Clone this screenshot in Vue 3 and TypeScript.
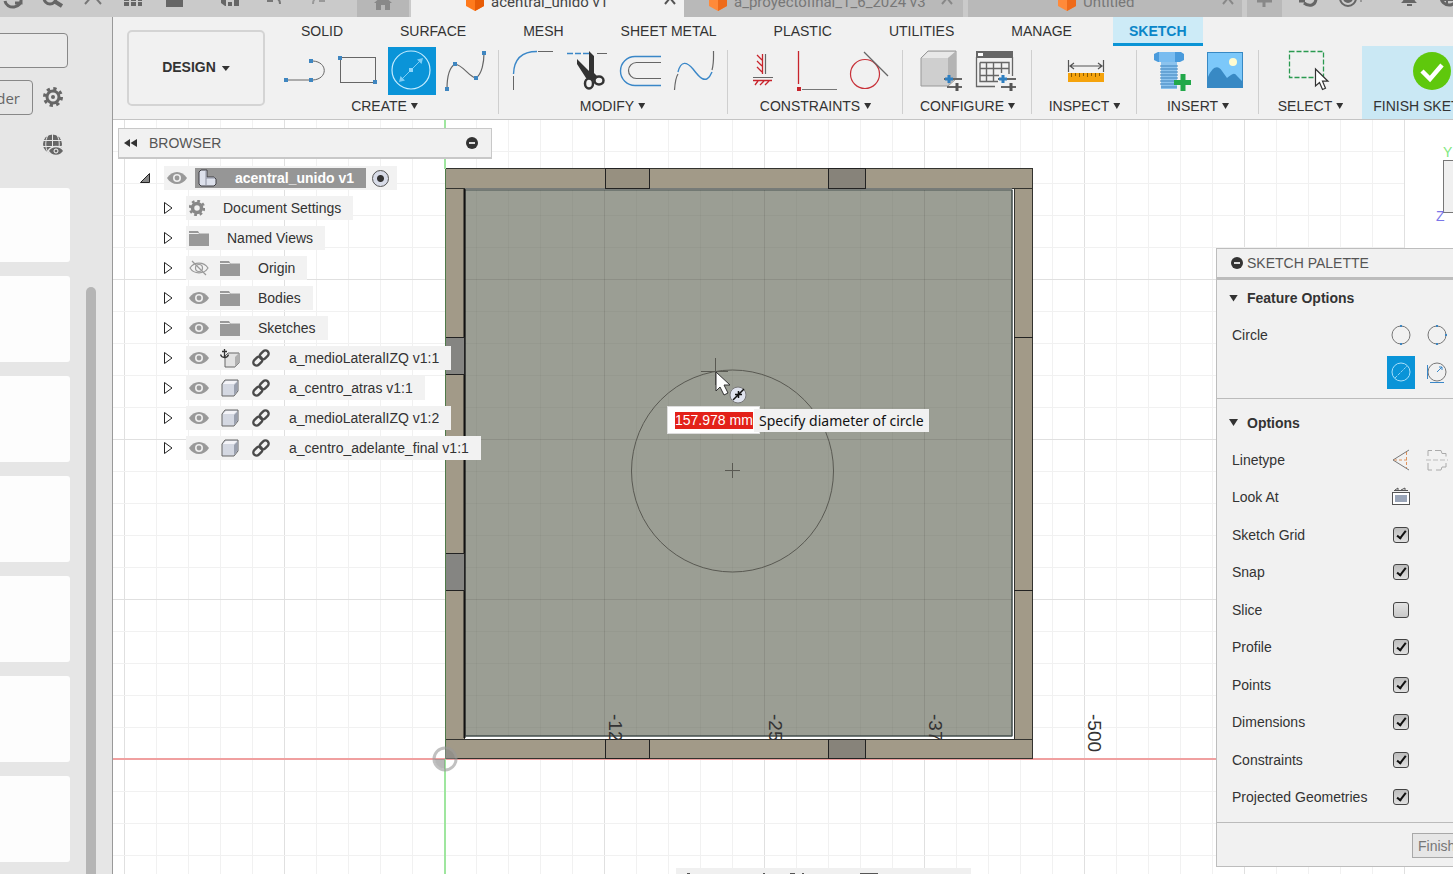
<script setup lang="ts">
import { ref } from 'vue'

interface ToolGroup { name: string; tools: { icon: string; label: string; active?: boolean }[] }
interface TreeNode { text: string; icons: string[] }
interface Option { label: string; checked: boolean }

const blue = '#3a87c8'
const dot = (x: number, y: number, c = '#3f86c0') => `<rect x="${x - 2}" y="${y - 2}" width="4" height="4" fill="${c}"/>`
const pin = (x: number, y: number) => `<rect x="${x - 1}" y="${y - 1}" width="2" height="2" fill="#3f86c0"/>`
const adjust = (x: number, y: number) =>
  `<path d="M${x} ${y + 4}H${x + 18}M${x + 3} ${y + 12}H${x + 18}" stroke="#666" stroke-width="2"/><path d="M${x + 5} ${y}v8M${x + 1} ${y + 4}h8" stroke="#2f7fc0" stroke-width="3"/><path d="M${x + 13} ${y + 8}v8" stroke="#555" stroke-width="3"/>`

const glyphs: Record<string, string> = {
  line: `<path d="M8 33H29M33 14C48 15 48 32 33 33" stroke="#666"/>${dot(6, 33)}${dot(31, 33)}${dot(31, 14)}`,
  rect: `<rect x="6.500" y="10.500" width="35" height="25" stroke="#666"/>${dot(6, 11)}${dot(41, 35)}`,
  circle: `<circle cx="23" cy="23" r="19" stroke="#c5ecff" stroke-width="1.200"/><path d="M14 32L32 14" stroke="#7fcdf5"/><path d="M11 35l1.500-6 4.500 4.500zM35 11l-6 1.500 4.500 4.500z" fill="#7fcdf5"/>${dot(23, 23, '#8fd6fa')}`,
  spline: `<path d="M5 42C5 29 8 20 13 17C21 18 27 30 34 31C40 27 42 15 42 6" stroke="#666" stroke-width="1.200"/>${dot(5, 42)}${dot(13, 17)}${dot(34, 31)}${dot(42, 6)}`,
  fillet: `<path d="M5.500 43V29M30 4.500H45" stroke="#666"/><path d="M5.500 27C6 12 14 4.500 29 4.500" stroke="${blue}" stroke-width="1.400"/>`,
  trim: `<path d="M5 6.500H27" stroke="${blue}" stroke-width="1.500" stroke-dasharray="6 2"/><path d="M35 6.500H45" stroke="#666"/><path d="M15 12L27 24V4L32 9V26L36 30L31 34L24 31L15 17z" fill="#333"/><ellipse cx="27" cy="36.500" rx="4" ry="5" stroke="#333" stroke-width="2.500"/><ellipse cx="37" cy="33.500" rx="4.500" ry="4" stroke="#333" stroke-width="2.500"/>`,
  offset: `<path d="M45 9.500H19a14.500 14.500 0 0 0 0 29H45" stroke="${blue}" stroke-width="1.400"/><path d="M45 15.500H20.500a8 8 0 0 0 0 16H45" stroke="#666" stroke-width="1.200"/>`,
  curve: `<path d="M4.500 43C5 36 6 30 8 27M42 23C44 16 43.500 10 43.500 4" stroke="#666" stroke-width="1.200"/><path d="M8 25C11 13 17 15 23 22C29 30 36 39 42 25" stroke="${blue}" stroke-width="1.400"/>`,
  fix: `<path d="M24.500 7V27M15 33.500H34M19 8l5 5M19 14l5 5M19 20l5 5M17 38l3-4M22 38l4-4M27 38l4-4" stroke="#c8242c" stroke-width="1.300"/><path d="M27.500 7V27M15 30.500H35" stroke="#666" stroke-width="1.200"/>`,
  perp: `<path d="M6.500 4V37" stroke="#c8242c" stroke-width="1.300"/>${dot(7, 42, '#c8242c')}<path d="M10 42.500H45" stroke="#777"/>`,
  tangent: `<circle cx="19" cy="27" r="14.500" stroke="#c8323a" stroke-width="1.200"/><path d="M18 5L42 29" stroke="#666" stroke-width="1.200"/>`,
  box: `<path d="M4 11L11 4H39V32L31 39H4z" fill="#cfcfcf" stroke="#999"/><path d="M5 11L11 5H38L31 11z" fill="#e8e8e8"/><path d="M31 11L38 5V32L31 38z" fill="#b4b4b4"/>${adjust(27, 28)}`,
  table: `<path d="M5.500 10V39.500H24M41.500 10V29" stroke="#666" stroke-width="1.300"/><rect x="5" y="4" width="37" height="7" fill="#666"/><rect x="7" y="6" width="5" height="3" fill="#fff"/><path d="M9 15.500H38V27M9 15.500V34.500H27M9 21.500H38M9 28.500H28M15.500 15V34M22.500 15V34M30.500 15V26" stroke="#666" stroke-width="1.400"/>${adjust(27, 28)}`,
  measure: `<path d="M7.500 13V25M42.500 13V25M9 19H41M13 16l-4 3 4 3M37 16l4 3-4 3" stroke="#555" stroke-width="1.200"/><rect x="7" y="26" width="36" height="9" fill="#f5a30c"/><path d="M10.500 26v4M14.500 26v3M18.500 26v4M22.500 26v3M26.500 26v4M30.500 26v3M34.500 26v4M38.500 26v3" stroke="#8a5a00"/>`,
  bolt: `<path d="M7 7l4-2H34l3 2v6l-4 2H11l-4-2z" fill="#4a9bdc"/><path d="M12 5H28V15H12z" fill="#79bcf0"/><rect x="14" y="15" width="16" height="27" fill="#8cc3ee"/><path d="M13 19H31M13 22H31M13 25H31M13 28H31M13 31H31M13 34H31M13 37H31M14 40H30" stroke="#3f83bd"/><path d="M36 27v17M27 35.500h17" stroke="#22a84a" stroke-width="5"/>`,
  image: `<rect x="6.500" y="5.500" width="35" height="35" fill="#7cc8fa" stroke="#3889c4"/><circle cx="32" cy="15" r="4" fill="#fffbd0"/><path d="M7 30C12 19 17 18 21 24L26 31C30 28 33 24 36 29L41 34V40H7z" fill="#3889c4"/>`,
  select: `<rect x="2.500" y="4.500" width="34" height="26" stroke="#2a9a50" stroke-width="1.300" stroke-dasharray="5 2"/><path d="M28.500 22V39l4-3.500 3 7 3-1.300-3-7h5.500z" fill="#fff" stroke="#333" stroke-width="1.200"/>`,
  done: `<circle cx="24" cy="24" r="19" fill="#5fc80c"/><path d="M14 24l8 8 12-14" stroke="#fff" stroke-width="4.500"/>`,
  eye: `<path d="M0 10C5 2 15 2 20 10C15 18 5 18 0 10z" fill="#999"/><circle cx="10" cy="10" r="4" fill="#eee"/><circle cx="10" cy="10" r="2.400" fill="#999"/>`,
  hidden: `<path d="M1 10C5 3.500 15 3.500 19 10C15 16.500 5 16.500 1 10zM3 3L17 17" stroke="#999" stroke-width="1.200"/><circle cx="10" cy="10" r="3.500" stroke="#999" stroke-width="1.200"/>`,
  folder: `<path d="M0 3h9l1.500 2.500H20V18H0z" fill="#999"/><path d="M0 5.500H9.500L11 4" stroke="#f0f0f0"/>`,
  body: `<path d="M2 6l3-4h13v11l-4 5H2z" fill="#d4d8e2" stroke="#666"/><path d="M3 6l3-3h11l-3 3z" fill="#f4f4f8"/><path d="M14 7L17.500 3.500v9l-3.500 5z" fill="#9aa0ae"/>`,
  anchor: `<path d="M5 8l3-3h11v10l-4 4H5z" fill="#e2e2e2" stroke="#666"/><path d="M15 19V9l4-4v10z" fill="#b0b0b0"/><path d="M4.500 1v9M2 3.500h5M.5 6.500c1 4 7 4 8 0" stroke="#333" stroke-width="1.300"/>`,
  link: `<g transform="rotate(-45 10 10)" stroke="#4a4a4a" stroke-width="2.400"><rect x="0.500" y="6.800" width="10" height="6.400" rx="3.200"/><rect x="9.500" y="6.800" width="10" height="6.400" rx="3.200"/></g>`,
  gear: `<circle cx="8" cy="8" r="4.500" stroke="#888" stroke-width="3.500"/><circle cx="8" cy="8" r="7" stroke="#888" stroke-width="2.500" stroke-dasharray="2.750 2.750"/>`,
  component: `<path d="M1 4l2-2h6v7h7l2 2v5l-2 2H3l-2-2z" fill="#dde1ec" stroke="#3e3e44"/><path d="M8 3v7h9M8 10v7" stroke="#8d91a0"/>`,
  c2: `<circle cx="14" cy="14" r="9" stroke="#777"/>${pin(14, 5)}${pin(14, 23)}`,
  c3: `<circle cx="14" cy="14" r="9" stroke="#777"/>${pin(14, 5)}${pin(14, 23)}${pin(23, 14)}`,
  cd: `<circle cx="14" cy="14" r="9" stroke="#a8e0fb"/><path d="M8 20L20 8" stroke="#8fd3f5" stroke-dasharray="3 1"/>`,
  ct: `<circle cx="14" cy="14" r="9" stroke="#777"/><path d="M4.500 7V21M7 24.500H21M14 14l5-5M16 9h3v3" stroke="${blue}"/>`,
  construct: `<path d="M22 4L6 14L22 24" stroke="#777"/><path d="M7 14H22M19.500 6V22" stroke="#e0935c" stroke-dasharray="3 2"/>`,
  center: `<path d="M5 10V4.500h4M12 4.500h6l1 3h4v3M23 17v4h-4l-1 3h-5M9 24H5v-7" stroke="#aaa"/><path d="M3 14h22" stroke="#bbb" stroke-dasharray="5 2"/>`,
  lookat: `<rect x="5.500" y="9.500" width="17" height="12" fill="#fff" stroke="#555"/><rect x="8" y="12" width="12" height="7" fill="#9aa5b8"/><path d="M5 9.500H23M7 7.500h14M8 7l3-2v2M14 7l4-2v2" stroke="#555"/>`,
}

const tabs = ['SOLID', 'SURFACE', 'MESH', 'SHEET METAL', 'PLASTIC', 'UTILITIES', 'MANAGE', 'SKETCH']
const activeTab = ref('SKETCH')

const groups: ToolGroup[] = [
  { name: 'CREATE', tools: [{ icon: 'line', label: 'Line' }, { icon: 'rect', label: 'Rectangle' }, { icon: 'circle', label: 'Circle', active: true }, { icon: 'spline', label: 'Spline' }] },
  { name: 'MODIFY', tools: [{ icon: 'fillet', label: 'Fillet' }, { icon: 'trim', label: 'Trim' }, { icon: 'offset', label: 'Offset' }, { icon: 'curve', label: 'Blend' }] },
  { name: 'CONSTRAINTS', tools: [{ icon: 'fix', label: 'Horizontal/Vertical' }, { icon: 'perp', label: 'Perpendicular' }, { icon: 'tangent', label: 'Tangent' }] },
  { name: 'CONFIGURE', tools: [{ icon: 'box', label: 'Configure' }, { icon: 'table', label: 'Table' }] },
  { name: 'INSPECT', tools: [{ icon: 'measure', label: 'Measure' }] },
  { name: 'INSERT', tools: [{ icon: 'bolt', label: 'Fastener' }, { icon: 'image', label: 'Canvas' }] },
  { name: 'SELECT', tools: [{ icon: 'select', label: 'Select' }] },
]

const tree: TreeNode[] = [
  { text: 'Document Settings', icons: ['gear'] },
  { text: 'Named Views', icons: ['folder'] },
  { text: 'Origin', icons: ['hidden', 'folder'] },
  { text: 'Bodies', icons: ['eye', 'folder'] },
  { text: 'Sketches', icons: ['eye', 'folder'] },
  { text: 'a_medioLateralIZQ v1:1', icons: ['eye', 'anchor', 'link'] },
  { text: 'a_centro_atras v1:1', icons: ['eye', 'body', 'link'] },
  { text: 'a_medioLateralIZQ v1:2', icons: ['eye', 'body', 'link'] },
  { text: 'a_centro_adelante_final v1:1', icons: ['eye', 'body', 'link'] },
]

const options = ref<Option[]>([
  { label: 'Sketch Grid', checked: true },
  { label: 'Snap', checked: true },
  { label: 'Slice', checked: false },
  { label: 'Profile', checked: true },
  { label: 'Points', checked: true },
  { label: 'Dimensions', checked: true },
  { label: 'Constraints', checked: true },
  { label: 'Projected Geometries', checked: true },
])

const diameter = ref('157.978 mm')
const columns = Array.from({ length: 41 }, (_, i) => i - 10).filter((c) => c !== 0)
const rows = Array.from({ length: 24 }, (_, i) => i - 20).filter((r) => r !== 0)
const marks = [
  { x: 164, text: '-125' },
  { x: 324, text: '-250' },
  { x: 484, text: '-375' },
]
</script>

<template>
  <div class="app">
    <header class="titlebar">
      <div class="quick first">
        <button aria-label="Refresh"><svg viewBox="0 0 24 17"><path d="M4 1a8 7 0 0 0 16-2M20-3v6h-6" stroke="#666" stroke-width="3" /></svg></button>
        <button aria-label="Search"><svg viewBox="0 0 24 17"><circle cx="9" cy="-2" r="6" stroke="#666" stroke-width="3" /><path d="M13 1l8 5" stroke="#666" stroke-width="4" /></svg></button>
        <button aria-label="Close"><svg viewBox="0 0 24 17"><path d="M4 4L12-5L20 4" stroke="#777" stroke-width="2" /></svg></button>
        <button aria-label="Apps"><svg viewBox="0 0 24 17"><path d="M3-3h5v4H3zM10-3h5v4h-5zM17-3h4v4h-4zM3 2h5v4H3zM10 2h5v4h-5zM17 2h4v4h-4z" fill="#666" /></svg></button>
      </div>
      <button class="file" aria-label="File"><svg viewBox="0 0 24 17"><path d="M3-4h17V7H3z" fill="#666" /></svg></button>
      <div class="quick second">
        <button aria-label="Save"><svg viewBox="0 0 24 17"><path d="M3-4h18V6H7L3 3z" fill="#666" /><path d="M9 6V1h6v5" stroke="#ccc" stroke-width="2" /></svg></button>
        <button aria-label="Undo"><svg viewBox="0 0 24 17"><path d="M6-3V1h5M12-2c5 0 6 3 6 6" stroke="#777" stroke-width="2" /></svg></button>
        <button aria-label="Redo"><svg viewBox="0 0 24 17"><path d="M7 4c0-5 2-6 6-6M18-3V1h-5" stroke="#999" stroke-width="2" /></svg></button>
      </div>
      <button class="home" aria-label="Home"><svg viewBox="0 0 24 17"><path d="M3 3L12-5L21 3h-2v7h-5V5h-4v5H5V3z" fill="#888" /></svg></button>
      <div class="doc current">
        <svg class="cube" viewBox="0 0 20 17"><path d="M1-4h18V6l-9 5-9-5z" fill="#ff7a1c" /><path d="M10 0l9-4V6l-9 5z" fill="#e85c06" /></svg>
        <span>acentral_unido v1</span><button aria-label="Close tab"><svg viewBox="0 0 24 17"><path d="M7 4L12-2L17 4" stroke="#555" stroke-width="2" /></svg></button>
      </div>
      <div class="doc">
        <svg class="cube" viewBox="0 0 20 17"><path d="M1-4h18V6l-9 5-9-5z" fill="#ff8a3a" /><path d="M10 0l9-4V6l-9 5z" fill="#ee6b1b" /></svg>
        <span>a_proyectofinal_1_6_2024 v3</span><button aria-label="Close tab"><svg viewBox="0 0 24 17"><path d="M7 4L12-2L17 4" stroke="#888" stroke-width="2" /></svg></button>
      </div>
      <div class="doc third">
        <svg class="cube" viewBox="0 0 20 17"><path d="M1-4h18V6l-9 5-9-5z" fill="#ff8a3a" /><path d="M10 0l9-4V6l-9 5z" fill="#ee6b1b" /></svg>
        <span>Untitled</span><button aria-label="Close tab"><svg viewBox="0 0 24 17"><path d="M7 4L12-2L17 4" stroke="#888" stroke-width="2" /></svg></button>
      </div>
      <button class="plus" aria-label="New tab"><svg viewBox="0 0 24 17"><path d="M12-4V7M5 1h15" stroke="#888" stroke-width="3" /></svg></button>
      <div class="quick status">
        <button aria-label="Sync"><svg viewBox="0 0 24 17"><path d="M3 1h6M20-2c0 8-7 9-12 5" stroke="#666" stroke-width="3" /></svg></button>
        <button aria-label="Jobs"><svg viewBox="0 0 24 17"><circle cx="10" cy="-2" r="8" stroke="#666" stroke-width="2" /><circle cx="10" cy="-2" r="5" fill="#666" /><path d="M23-2v4" stroke="#666" /></svg></button>
        <button class="bell" aria-label="Notifications"><svg viewBox="0 0 24 17"><path d="M4 3c3-2 3-5 3-8h10c0 3 0 6 3 8zM10 4h5v2h-5z" fill="#666" /></svg></button>
        <button aria-label="Help"><svg viewBox="0 0 24 17"><circle cx="10" cy="-3" r="8" stroke="#666" stroke-width="3" /><path d="M2 0h16M8-3v8" stroke="#666" stroke-width="2" /></svg></button>
      </div>
    </header>

    <div class="body">
      <aside class="data">
        <input class="search" type="text" aria-label="Search data">
        <div class="actions">
          <button class="folder">der</button>
          <button class="plain" aria-label="Settings">
            <svg width="22" height="22" viewBox="0 0 22 22"><circle cx="11" cy="10" r="6" stroke="#666" stroke-width="3" /><circle cx="11" cy="10" r="8.500" stroke="#666" stroke-width="3" stroke-dasharray="3.300 3.380" /><circle cx="11" cy="10" r="2" fill="#666" /></svg>
          </button>
        </div>
        <div class="share">
          <button class="plain" aria-label="Shared view">
            <svg width="22" height="22" viewBox="0 0 22 22"><circle cx="10.500" cy="10" r="9.500" fill="#666" /><path d="M1 6.500h19M1 12.500h19M10.500 0v20M6 1c-3 6-3 12 0 18M15 1c3 6 3 12 0 18" stroke="#e6e6e6" /><path d="M6 17c4-6 12-6 16 0c-4 6-12 6-16 0z" fill="#666" stroke="#e6e6e6" stroke-width="1.500" /><circle cx="14" cy="17" r="2" stroke="#fff" /></svg>
          </button>
        </div>
        <div class="list">
          <ul class="cards"><li v-for="n in 7" :key="n" /></ul>
          <div class="thumb" />
        </div>
      </aside>

      <main class="main">
        <div class="toolbar">
          <button class="design">DESIGN<i class="tri" /></button>
          <div class="ribbon">
            <nav class="tabs">
              <button v-for="t in tabs" :key="t" :class="{ on: t === activeTab }" @click="activeTab = t">{{ t }}</button>
            </nav>
            <div class="groups">
              <section v-for="g in groups" :key="g.name" class="group" :class="{ wide: g.tools.length === 4 }">
                <div class="tools">
                  <button v-for="t in g.tools" :key="t.icon" class="tool" :class="{ on: t.active }" :aria-label="t.label">
                    <svg viewBox="0 0 48 48" v-html="glyphs[t.icon]" />
                  </button>
                </div>
                <button class="caption">{{ g.name }}<i class="tri" /></button>
              </section>
              <section class="group finish">
                <div class="tools"><button class="tool" aria-label="Finish"><svg viewBox="0 0 48 48" v-html="glyphs.done" /></button></div>
                <button class="caption">FINISH SKETCH<i class="tri" /></button>
              </section>
            </div>
          </div>
        </div>

        <div class="viewport">
          <svg class="scene">
            <g transform="translate(332 639)">
              <line v-for="c in columns" :key="'c' + c" :x1="c * 32 - 0.5" :x2="c * 32 - 0.5" y1="-640" y2="130" :class="c % 5 ? 'minor' : 'major'" />
              <line v-for="r in rows" :key="'r' + r" x1="-332" x2="959" :y1="r * 32 + 0.5" :y2="r * 32 + 0.5" :class="r % 5 ? 'minor' : 'major'" />
              <rect x="0" y="-590" width="588" height="590" fill="#fff" />
              <rect x="20" y="-569" width="547" height="546" class="plate" />
              <line class="axis-x" x1="-332" y1="0" x2="1020" y2="0" />
              <g class="wood">
                <rect x=".5" y="-590.500" width="587" height="20" />
                <rect x=".5" y="-19.500" width="587" height="19" />
                <rect x=".5" y="-570.500" width="19" height="551" />
                <rect x="569.500" y="-570.500" width="18" height="551" />
              </g>
              <path d="M20-570H567" stroke="#777b78" stroke-width="2" />
              <path d="M19.500-570V-21" stroke="#111" stroke-width="2" />
              <path d="M567-569V-23H20" stroke="#3f4a48" />
              <g class="joint">
                <rect x="160.500" y="-590.500" width="44" height="20" fill="#979080" />
                <rect x="383.500" y="-590.500" width="37" height="20" fill="#87837a" />
                <rect x="160.500" y="-19.500" width="44" height="19" fill="#9b9383" />
                <rect x="383.500" y="-19.500" width="37" height="19" fill="#87837a" />
                <rect x=".5" y="-421.500" width="19" height="37" fill="#858582" />
                <rect x=".5" y="-205.500" width="19" height="37" fill="#858582" />
                <path d="M569-421.500H588M569-168.500H588" />
              </g>
              <g class="over">
                <path d="M159.500-569V-23M319.500-569V-23M479.500-569V-23M20-479.500H567M20-319.500H567M20-159.500H567" opacity="0.090" />
                <template v-for="c in 17" :key="'o' + c"><path v-if="c % 5" :d="`M${c * 32 - 0.5}-569V-23M20 ${-c * 32 + 0.5}H567`" opacity="0.030" /></template>
              </g>

              <line class="axis-y" x1="0" y1="-640" x2="0" y2="-590" />
              <line class="axis-y" x1="0" y1="0" x2="0" y2="130" />
              <line class="axis-edge" x1="0.500" y1="-590" x2="0.500" y2="0" />
              <g opacity="0.600">
                <circle cx="0" cy="0" r="11" stroke="#999" stroke-width="3" />
                <path d="M0 0V10A10 10 0 0 1-10 0zM0 0V-10A10 10 0 0 1 10 0z" fill="#888" />
              </g>

              <g class="sketch">
                <circle cx="287.500" cy="-288" r="101" />
                <path d="M280-288.500H295M287.500-296V-281M256-387.500H283M270.500-401V-374" />
              </g>
              <clipPath id="above"><rect x="100" y="-60" width="450" height="41" /></clipPath>
              <g clip-path="url(#above)"><text v-for="m in marks" :key="m.text" class="mark" :transform="`translate(${m.x} -45) rotate(90)`">{{ m.text }}</text></g>
              <text class="mark" transform="translate(643 -45) rotate(90)">-500</text>

              <path d="M271-387V-368l4-4 4 8 4-2-4-8h6z" fill="#fff" stroke="#333" />
              <circle cx="293" cy="-364" r="8" fill="#dfe3ee" stroke="#777" />
              <path d="M288-359L299-370M290-364.500h7M293.500-368v7" stroke="#111" stroke-width="1.500" />
            </g>
          </svg>

          <div class="prompt">
            <div class="field"><input v-model="diameter" type="text" aria-label="Diameter"></div>
            <span>Specify diameter of circle</span>
          </div>

          <div class="viewcube">
            <b class="y">Y</b>
            <div class="face" />
            <b class="z">Z</b>
          </div>

          <section class="browser">
            <header>
              <svg width="13" height="10" viewBox="0 0 13 10"><path d="M6 1v8L0 5zM13 1v8L6.500 5z" fill="#333" /></svg>
              <span>BROWSER</span>
              <button class="minus" aria-label="Minimize browser" />
            </header>
            <div class="node root">
              <svg width="10" height="10" viewBox="0 0 10 10"><path d="M9.500.5v9H.5z" fill="#888" stroke="#222" /></svg>
              <div class="chip">
                <svg width="20" height="20" viewBox="0 0 20 20" v-html="glyphs.eye" />
                <div class="title"><svg width="20" height="20" viewBox="0 0 20 20" v-html="glyphs.component" /><b>acentral_unido v1</b></div>
                <input type="radio" checked aria-label="Activate component">
              </div>
            </div>
            <div v-for="n in tree" :key="n.text" class="node">
              <svg width="9" height="12" viewBox="0 0 9 12"><path d="M.5.500L8 6L.5 11.500z" stroke="#222" fill="#fff" /></svg>
              <div class="chip">
                <svg v-for="i in n.icons" :key="i" :width="i === 'gear' ? 16 : 20" :height="i === 'gear' ? 16 : 20" :viewBox="i === 'gear' ? '0 0 16 16' : '0 0 20 20'" v-html="glyphs[i]" />
                <span>{{ n.text }}</span>
              </div>
            </div>
          </section>

          <section class="palette">
            <header><button class="minus" aria-label="Minimize palette" /><span>SKETCH PALETTE</span></header>
            <div class="block">
              <h3><i class="tri" />Feature Options</h3>
              <div class="row">
                <span>Circle</span>
                <div class="icons"><button v-for="i in ['c2', 'c3']" :key="i" :aria-label="i === 'c2' ? '2-point circle' : '3-point circle'"><svg viewBox="0 0 28 28" v-html="glyphs[i]" /></button></div>
              </div>
              <div class="row">
                <span />
                <div class="icons"><button class="on" aria-label="Diameter circle"><svg viewBox="0 0 28 28" v-html="glyphs.cd" /></button><button aria-label="Tangent circle"><svg viewBox="0 0 28 28" v-html="glyphs.ct" /></button></div>
              </div>
            </div>
            <div class="block last">
              <h3><i class="tri" />Options</h3>
              <div class="row">
                <span>Linetype</span>
                <div class="icons"><button aria-label="Construction"><svg viewBox="0 0 28 28" v-html="glyphs.construct" /></button><button aria-label="Centerline"><svg viewBox="0 0 28 28" v-html="glyphs.center" /></button></div>
              </div>
              <div class="row">
                <span>Look At</span>
                <div class="icons"><button aria-label="Look at"><svg viewBox="0 0 28 28" v-html="glyphs.lookat" /></button></div>
              </div>
              <label v-for="o in options" :key="o.label" class="row"><span>{{ o.label }}</span><input v-model="o.checked" type="checkbox"></label>
            </div>
            <footer><button>Finish Sketch</button></footer>
          </section>

          <div class="navbar">
            <svg width="295" height="6" viewBox="0 0 295 6"><path d="M11 5.500h3M87 5.500h2M114 5.500h5M126 5.500h2M184 5.500h18" stroke="#555" /></svg>
          </div>
        </div>
      </main>
    </div>
  </div>
</template>

<style>
html, body { margin: 0; overflow: hidden; }
</style>

<style scoped>
.app { height: 100vh; display: flex; flex-direction: column; overflow: hidden; background: #fff; color: #333; font: 14px/20px "Liberation Sans", Arial, sans-serif; }
.app *, .app *::after { box-sizing: border-box; }
button { border: 0; background: none; padding: 0; font: inherit; color: inherit; cursor: pointer; white-space: nowrap; }
svg { display: block; fill: none; flex: none; }
.tri { display: inline-block; width: 7px; height: 6px; background: #333; clip-path: polygon(0 0, 100% 0, 50% 100%); }

.titlebar { display: flex; flex: none; height: 17px; background: #cacaca; overflow: hidden; }
.titlebar button { width: 24px; height: 17px; flex: none; }
.titlebar button svg { width: 24px; height: 17px; }
.quick { display: flex; flex: none; }
.quick.first { gap: 16px; padding-left: 1px; }
.file { margin-left: 18px; }
.quick.second { gap: 20px; padding: 0 27px 0 31px; }
.titlebar .home { width: 52px; background: #b7b7b7; padding-left: 14px; margin-right: 2px; }
.doc { display: flex; width: 279px; flex: none; background: #b9b9b9; color: #777; padding-left: 24px; font: 15px/20px Roboto, sans-serif; }
.doc span { flex: 1; margin-top: -8px; padding-left: 6px; white-space: nowrap; }
.doc .cube { width: 20px; height: 17px; }
.doc button { margin-right: 4px; }
.doc.current { width: 273px; background: #f1f1f1; color: #444; padding-left: 54px; }
.doc.current button { margin-right: 2px; }
.doc.third { width: 274px; margin-left: 5px; padding-left: 89px; }
.doc.third button { margin-right: 2px; }
.titlebar .plus { width: 35px; margin-left: 5px; background: #b9b9b9; padding-left: 5px; }
.quick.status { padding-left: 14px; gap: 18px; }
.bell { margin-left: 17px; }

.body { flex: 1; display: flex; min-height: 0; }
.data { width: 113px; flex: none; background: #e6e6e6; border-right: 1px solid #999; display: flex; flex-direction: column; overflow: hidden; }
.search { width: 78px; height: 35px; margin: 16px 0 0 -10px; border: 1px solid #888; border-radius: 4px; background: #ebebeb; }
.actions { display: flex; align-items: center; gap: 9px; margin-top: 12px; }
.folder { width: 43px; height: 35px; margin-left: -10px; border: 1px solid #888; border-radius: 4px; text-align: right; padding-right: 12px; color: #666; font: 15px/20px "Open Sans", sans-serif; }
.plain { width: 22px; height: 22px; }
.share { padding: 19px 0 0 42px; }
.list { flex: 1; display: flex; margin-top: 27px; min-height: 0; }
.cards { list-style: none; margin: 0; padding: 0; width: 70px; }
.cards li { height: 86px; margin-bottom: 14px; background: #fdfdfd; border-radius: 0 3px 3px 0; }
.cards li:first-child { height: 74px; }
.thumb { width: 10px; margin: 99px 0 0 16px; background: #b5b5b5; border-radius: 5px 5px 0 0; }

.main { flex: 1; min-width: 0; display: flex; flex-direction: column; }
.toolbar { flex: none; height: 103px; display: flex; background: #f1f1f1; border-bottom: 1px solid #c4c4c4; padding-left: 14px; overflow: hidden; }
.design { width: 138px; height: 76px; margin: 13px 7px 0 0; padding-bottom: 2px; flex: none; border: 2px solid #d4d4d4; border-radius: 5px; font-weight: bold; }
.design .tri { width: 8px; margin-left: 6px; height: 5px; vertical-align: 1px; }
.ribbon { flex: 1; min-width: 0; }
.tabs { display: flex; gap: 25px; height: 29px; padding-left: 13px; }
.tabs button { padding: 2px 16px 0; border-bottom: 3px solid transparent; }
.tabs .on { background: #cdebf7; border-color: #0a94d6; color: #0a86c8; font-weight: bold; }
.groups { display: grid; grid-template-columns: 227px 229px 175px 129px 105px 122px 103px 140px; height: 73px; }
.group { display: flex; flex-direction: column; align-items: center; position: relative; padding-top: 1px; }
.group.wide { padding-right: 2px; }
.group:not(.finish):not(:nth-last-child(2))::after { content: ""; position: absolute; right: 0; top: 4px; width: 1px; height: 64px; background: #cfcfcf; }
.finish { background: #cae8f4; }
.tools { display: flex; gap: 6px; }
.tool { width: 48px; height: 48px; }
.tool svg { width: 48px; height: 48px; }
.tool.on { background: #0a94d8; }
.caption { margin-top: 1px; }
.caption .tri { margin-left: 4px; vertical-align: 2px; }

.viewport { flex: 1; min-height: 0; position: relative; overflow: hidden; background: #fff; }
.scene { width: 100%; height: 100%; }
.minor { stroke: #f1f1f1; }
.major { stroke: #e0e0e0; }
.axis-x { stroke: #f0a0a0; stroke-width: 2px; }
.axis-y { stroke: #9fe69f; stroke-width: 2px; }
.axis-edge { stroke: #4f7a4a; }
.plate { fill: #9b9e94; stroke: #4a5553; }
.wood { fill: #a29a88; stroke: #33332f; }
.joint { stroke: #222; }
.over { stroke: #000; }
.sketch { stroke: #595952; }
.mark { font-size: 19px; fill: #333; }

.prompt { position: absolute; left: 554px; top: 286px; display: flex; align-items: center; }
.field { height: 28px; padding: 5px 6px 5px 7px; background: #fff; border: 1px solid #ddd; }
.field input { display: block; width: 78px; height: 17px; border: 0; padding: 0; background: #e32119; color: #fff; font: 14px/17px "Liberation Sans", sans-serif; }
.prompt span { margin-left: -6px; padding: 0 5px; line-height: 23px; background: #f1f1f1; color: #111; font-family: "Noto Sans", sans-serif; white-space: nowrap; }

.viewcube { position: absolute; right: 0; top: 23px; width: 18px; line-height: 18px; }
.viewcube b { display: block; font-weight: normal; }
.viewcube .y { color: #7fe87f; padding-left: 8px; }
.viewcube .z { color: #7a76e8; margin-top: -6px; padding-left: 1px; }
.face { height: 53px; margin: -1px 0 0 8px; background: #f0f0f0; border: 1px solid #777; border-right: 0; }

.minus { width: 12px; height: 12px; border-radius: 50%; background: #333; display: grid; place-items: center; flex: none; }
.minus::after { content: ""; width: 6px; height: 2px; background: #ddd; }

.browser { position: absolute; left: 5px; top: 8px; width: 374px; }
.browser header { display: flex; align-items: center; height: 31px; padding: 0 13px 0 5px; gap: 12px; background: #f1f1f1; border: 1px solid #c8c8c8; border-bottom-width: 2px; color: #555; }
.browser header .minus { margin-left: auto; }
.node { display: flex; align-items: center; height: 30px; padding-left: 46px; gap: 13px; }
.root { margin-top: 4px; padding-left: 22px; gap: 14px; }
.chip { display: flex; align-items: center; gap: 11px; height: 24px; padding: 0 12px 0 3px; background: #f2f2f2; }
.chip > span { margin-left: 7px; white-space: nowrap; }
.root .chip { gap: 8px; padding-right: 8px; }
.title { display: flex; align-items: center; height: 20px; padding: 0 12px 0 3px; gap: 17px; background: #969696; color: #fff; white-space: nowrap; }
.root input { appearance: none; width: 17px; height: 17px; margin: 0 0 0 -2px; border: 1px solid #555; border-radius: 50%; background: radial-gradient(circle, #333 0 3px, #d8dce8 4px); }

.palette { position: absolute; top: 128px; right: 0; width: 237px; background: #f1f1f1; border: 1px solid #bdbdbd; border-right: 0; overflow: hidden; }
.palette header { display: flex; align-items: center; gap: 4px; height: 31px; padding-left: 14px; border-bottom: 3px solid #bcbcbc; color: #555; white-space: nowrap; }
.block { padding: 0 0 7px 15px; border-bottom: 1px solid #bbb; }
.block.last { padding-bottom: 6px; }
.palette h3 { display: flex; align-items: center; gap: 9px; height: 36px; margin: 0 0 0 -3px; font-size: 14px; font-weight: bold; }
.block.last h3 { height: 42px; padding-top: 5px; }
.palette h3 .tri { width: 9px; height: 7px; }
.row { display: grid; grid-template-columns: 155px auto; align-items: center; justify-content: start; height: 37px; white-space: nowrap; }
.row:nth-child(odd) { height: 38px; }
.icons { display: flex; gap: 8px; }
.icons button { width: 28px; height: 33px; display: grid; place-items: center; }
.icons svg { width: 28px; height: 28px; }
.icons .on { background: #0a94d8; }
.row input { appearance: none; width: 16px; height: 16px; margin: 0 0 0 6px; border: 1px solid #444; border-radius: 3px; background: linear-gradient(#e4e4e4, #c8c8c8); display: grid; place-items: center; }
.row input:checked { background: linear-gradient(#bdbdbd, #e0e0e0); }
.row input:checked::after { content: ""; width: 5px; height: 10px; border: solid #111; border-width: 0 2px 2px 0; transform: rotate(38deg); margin-top: -2px; }
.palette footer { display: flex; padding: 10px 0 8px 195px; }
.palette footer button { height: 25px; padding: 0 5px; border: 1px solid #a8a8a8; background: #e6e6e6; color: #777; flex: none; }

.navbar { position: absolute; left: 563px; bottom: 0; background: #f0f0f0; }
</style>
